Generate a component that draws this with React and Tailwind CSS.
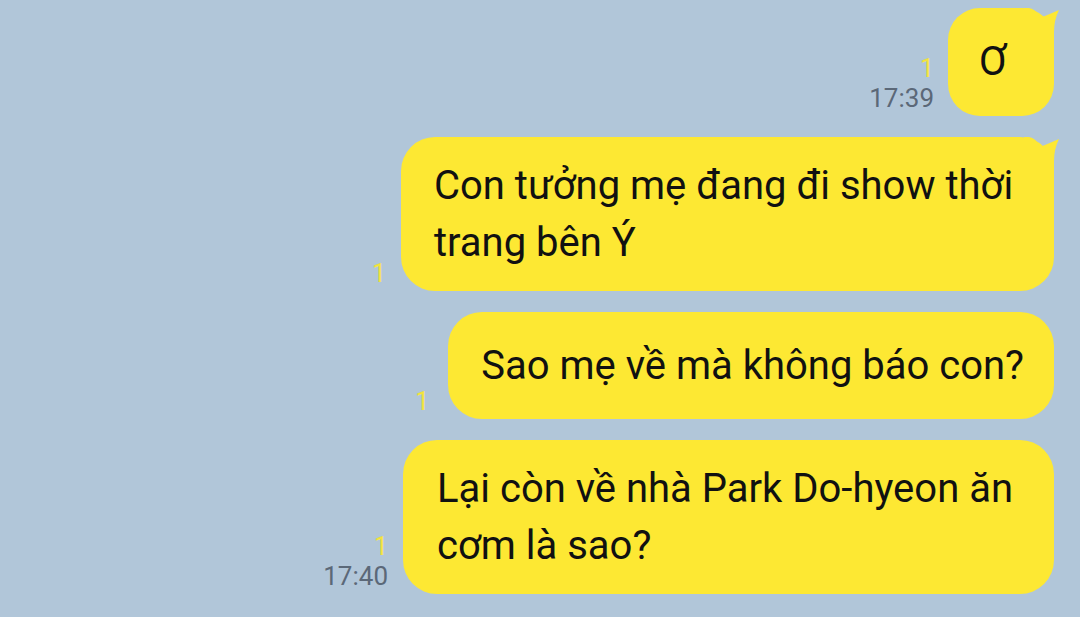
import React from "react";

const Tail = () => (
  <svg
    className="absolute top-0 right-[-6px]"
    width="36"
    height="40"
    viewBox="0 0 36 40"
  >
    <path
      d="M0 0 L5 0 Q12 1 16 10 Q26 6 35 2 Q30 12 30 24 L30 40 L0 40 Z"
      fill="#fde833"
    />
  </svg>
);

function Meta({ time }) {
  return (
    <div
      className="flex flex-col items-end pb-[3px]"
      style={{ fontFamily: "Roboto, 'Noto Sans', sans-serif" }}
    >
      <span className="text-[25px] leading-[28px] text-[#f3e33c]">1</span>
      {time && (
        <span className="text-[26px] leading-[30px] text-[#5b6878]">{time}</span>
      )}
    </div>
  );
}

export default function App() {
  return (
    <div
      className="w-[1080px] h-[617px] bg-[#b1c6d9] flex flex-col items-end pr-[26px] pt-[8px] gap-[21px] overflow-hidden"
      style={{ fontFamily: "Roboto, 'Noto Sans', sans-serif" }}
    >
      <div className="flex items-end gap-[14px]">
        <Meta time="17:39" />
        <div className="relative w-[106px] h-[108px] rounded-[32px] bg-[#fde833] flex items-center justify-center pr-[16px] text-[40px] text-[#111]">
          <Tail />
          <span className="relative">Ơ</span>
        </div>
      </div>

      <div className="flex items-end gap-[15px]">
        <Meta />
        <div className="relative w-[653px] rounded-[34px] bg-[#fde833] pl-[33px] pr-[20px] py-[20px] text-[40px] leading-[57px] text-[#111]">
          <Tail />
          <span className="relative">Con tưởng mẹ đang đi show thời trang bên Ý</span>
        </div>
      </div>

      <div className="flex items-end gap-[19px]">
        <Meta />
        <div className="rounded-[34px] bg-[#fde833] pl-[33px] pr-[30px] py-[25px] text-[40px] leading-[57px] text-[#111] whitespace-nowrap">
          Sao mẹ về mà không báo con?
        </div>
      </div>

      <div className="flex items-end gap-[15px]">
        <Meta time="17:40" />
        <div className="w-[651px] rounded-[34px] bg-[#fde833] pl-[34px] pr-[20px] py-[20px] text-[40px] leading-[57px] text-[#111]">
          Lại còn về nhà Park Do-hyeon ăn cơm là sao?
        </div>
      </div>
    </div>
  );
}
